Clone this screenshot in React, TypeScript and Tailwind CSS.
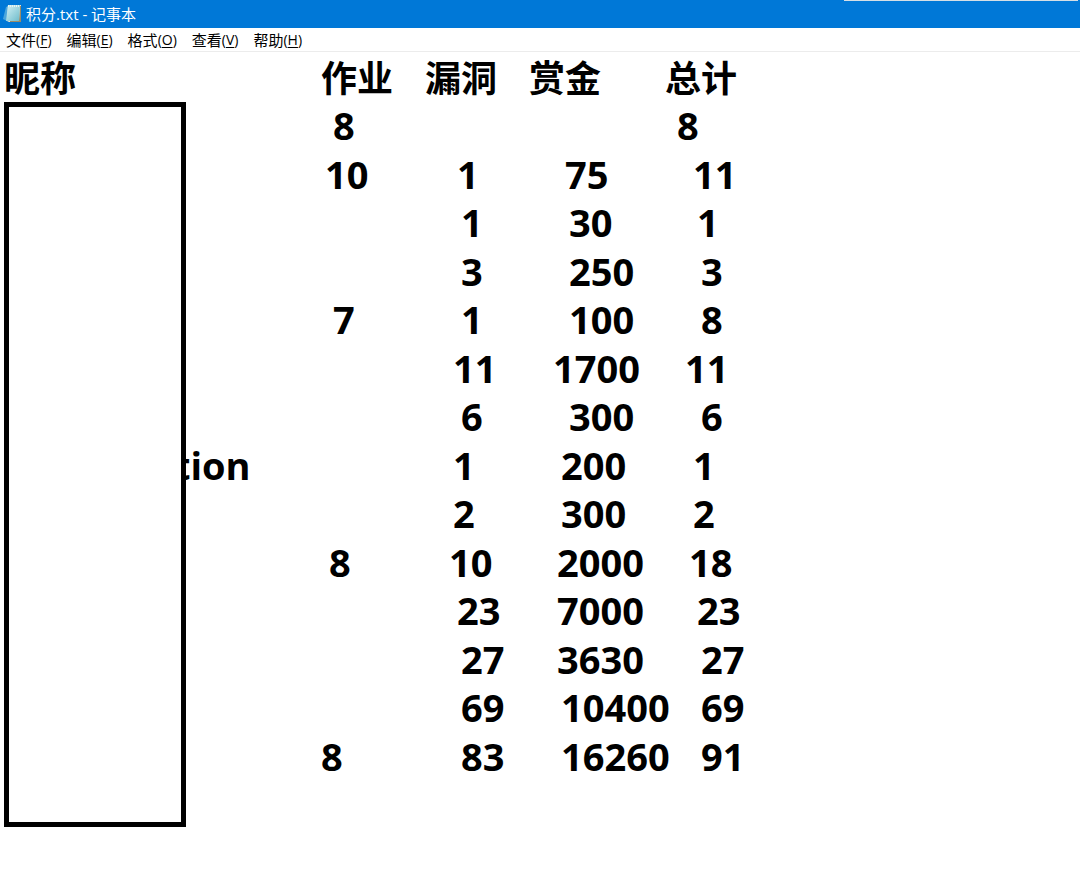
import React from "react";

type Cell = { text: string; indent: string };
type Row = { name?: string; homework?: Cell; bugs?: Cell; bounty?: Cell; total: Cell };

const c = (text: string, indent: string): Cell => ({ text, indent });

const rows: Row[] = [
  { homework: c("8", "pl-3"), total: c("8", "pl-3") },
  { homework: c("10", "pl-1"), bugs: c("1", "pl-8"), bounty: c("75", "pl-9"), total: c("11", "pl-7") },
  { bugs: c("1", "pl-9"), bounty: c("30", "pl-10"), total: c("1", "pl-8") },
  { bugs: c("3", "pl-9"), bounty: c("250", "pl-10"), total: c("3", "pl-9") },
  { homework: c("7", "pl-3"), bugs: c("1", "pl-9"), bounty: c("100", "pl-10"), total: c("8", "pl-9") },
  { bugs: c("11", "pl-7"), bounty: c("1700", "pl-6"), total: c("11", "pl-5") },
  { bugs: c("6", "pl-9"), bounty: c("300", "pl-10"), total: c("6", "pl-9") },
  { name: "tion", bugs: c("1", "pl-7"), bounty: c("200", "pl-8"), total: c("1", "pl-7") },
  { bugs: c("2", "pl-7"), bounty: c("300", "pl-8"), total: c("2", "pl-7") },
  { homework: c("8", "pl-2"), bugs: c("10", "pl-6"), bounty: c("2000", "pl-7"), total: c("18", "pl-6") },
  { bugs: c("23", "pl-8"), bounty: c("7000", "pl-7"), total: c("23", "pl-8") },
  { bugs: c("27", "pl-9"), bounty: c("3630", "pl-7"), total: c("27", "pl-9") },
  { bugs: c("69", "pl-9"), bounty: c("10400", "pl-8"), total: c("69", "pl-9") },
  { homework: c("8", "pl-0"), bugs: c("83", "pl-9"), bounty: c("16260", "pl-8"), total: c("91", "pl-9") },
];

const menus = [
  ["文件", "F"],
  ["编辑", "E"],
  ["格式", "O"],
  ["查看", "V"],
  ["帮助", "H"],
];

function NotepadIcon() {
  return (
    <svg width="20" height="20" viewBox="0 0 20 20" aria-hidden="true">
      <defs>
        <linearGradient id="page" x1="0" y1="0" x2="1" y2="1">
          <stop offset="0" stopColor="#d4f1f5" />
          <stop offset="1" stopColor="#6dbccb" />
        </linearGradient>
      </defs>
      <path d="M4 3 L6 2 L5 17 L1 15 Z" fill="#4aa5dc" />
      <path d="M6 1 H19 V18 H7 L5 17 Z" fill="#e9e4d2" />
      <path d="M18 2 H19 V18 H8 V17 H17 Z" fill="#9b8b68" />
      <path d="M6 1 H18 L17 17 H4 Z" fill="url(#page)" />
      <path d="M6 2 H18" stroke="#e8f4f2" strokeWidth="2" strokeDasharray="1 1" />
    </svg>
  );
}

function DataCell({ cell }: { cell?: Cell }) {
  return <td className={`p-0 ${cell ? cell.indent : ""}`}>{cell?.text}</td>;
}

export default function App() {
  return (
    <div className="min-h-screen overflow-hidden bg-white text-black">
      <header className="relative flex h-7 items-center gap-1 bg-[#0078d7] pl-0.5 font-['Open_Sans','Noto_Sans_CJK_SC',sans-serif] text-[15px] text-white">
        <div className="absolute top-0 right-0.5 h-px w-[234px] bg-[#d5dfe6]" />
        <NotepadIcon />
        <h1>积分.txt - 记事本</h1>
      </header>
      <nav className="flex h-6 items-center gap-[15px] border-b border-[#ececec] pl-1.5 font-['Open_Sans','Noto_Sans_CJK_SC',sans-serif] text-[15px]">
        {menus.map(([label, key]) => (
          <button key={key} type="button" className="flex items-center leading-6">
            {label}
            <span className="text-sm leading-6">
              (<u className="underline-offset-2">{key}</u>)
            </span>
          </button>
        ))}
      </nav>
      <main className="relative pt-[5px] font-['Open_Sans','Noto_Sans_CJK_SC',sans-serif] text-[38px] leading-[48px] font-bold">
        <table className="h-[723px] w-[801px] table-fixed border-collapse text-left whitespace-nowrap">
          <colgroup>
            <col className="w-[321px]" />
            <col className="w-[104px]" />
            <col className="w-[104px]" />
            <col className="w-[136px]" />
            <col className="w-[136px]" />
          </colgroup>
          <thead className="text-4xl leading-[44px]">
            <tr>
              <th className="p-0 pl-1">昵称</th>
              <th className="p-0">作业</th>
              <th className="p-0">漏洞</th>
              <th className="p-0">赏金</th>
              <th className="p-0">总计</th>
            </tr>
          </thead>
          <tbody>
            {rows.map((row, i) => (
              <tr key={i}>
                <td className="p-0 pl-[174px]">{row.name}</td>
                <DataCell cell={row.homework} />
                <DataCell cell={row.bugs} />
                <DataCell cell={row.bounty} />
                <DataCell cell={row.total} />
              </tr>
            ))}
          </tbody>
        </table>
        <div className="absolute top-[50px] left-1 h-[725px] w-[182px] border-5 border-black bg-white" />
      </main>
    </div>
  );
}
